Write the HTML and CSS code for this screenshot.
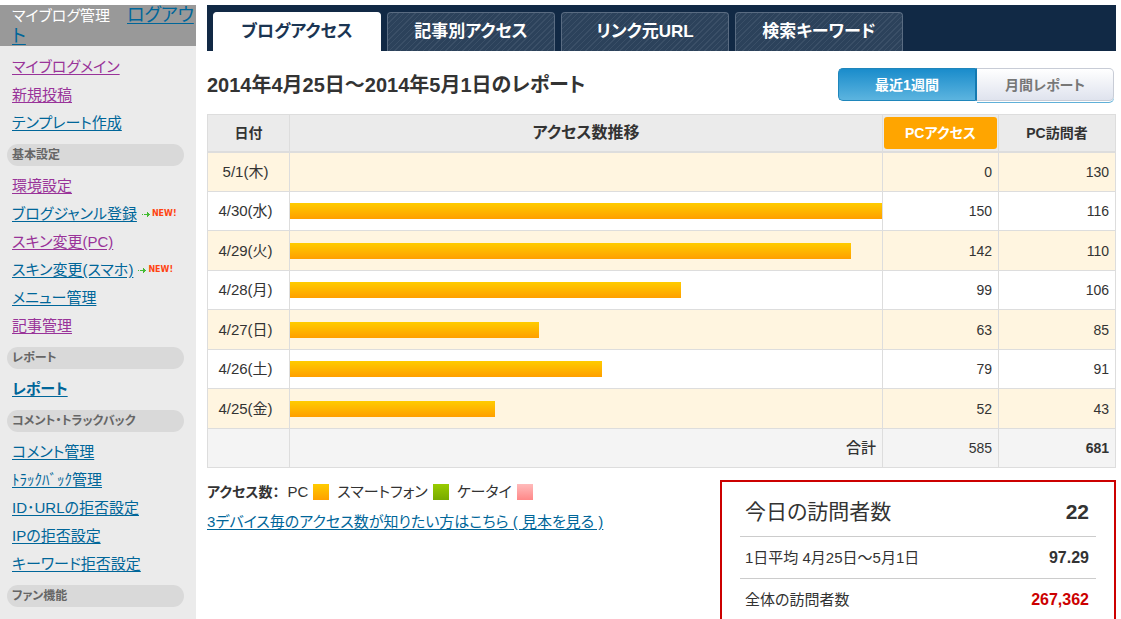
FILE: index.html
```html
<!DOCTYPE html>
<html lang="ja">
<head>
<meta charset="utf-8">
<title>アクセスレポート</title>
<link rel="stylesheet" href="styles.css">
</head>
<body>
<div class="page">
  <nav class="sidebar" aria-label="マイブログ管理">
    <div class="side-head"><span class="side-title">マイブログ管理</span><a class="logout" href="#">ログアウト</a></div>
    <ul class="links">
      <li><a class="visited" href="#">マイブログメイン</a></li>
      <li><a class="visited" href="#">新規投稿</a></li>
      <li><a href="#">テンプレート作成</a></li>
    </ul>
    <h2 class="group">基本設定</h2>
    <ul class="links">
      <li><a class="visited" href="#">環境設定</a></li>
      <li><a href="#">ブログジャンル登録</a><span class="new"><svg class="arrow" viewBox="0 0 9 7" aria-hidden="true"><path d="M0 3h1v1H0zM2 3h3V1h1v1h1v1h1v1H7v1H6v1H5V4H2z"/></svg>NEW!</span></li>
      <li><a class="visited" href="#">スキン変更(PC)</a></li>
      <li><a href="#">スキン変更(スマホ)</a><span class="new"><svg class="arrow" viewBox="0 0 9 7" aria-hidden="true"><path d="M0 3h1v1H0zM2 3h3V1h1v1h1v1h1v1H7v1H6v1H5V4H2z"/></svg>NEW!</span></li>
      <li><a href="#">メニュー管理</a></li>
      <li><a class="visited" href="#">記事管理</a></li>
    </ul>
    <h2 class="group">レポート</h2>
    <ul class="links">
      <li><a class="current" href="#">レポート</a></li>
    </ul>
    <h2 class="group">コメント・トラックバック</h2>
    <ul class="links">
      <li><a href="#">コメント管理</a></li>
      <li><a href="#">ﾄﾗｯｸﾊﾞｯｸ管理</a></li>
      <li><a href="#">ID･URLの拒否設定</a></li>
      <li><a href="#">IPの拒否設定</a></li>
      <li><a href="#">キーワード拒否設定</a></li>
    </ul>
    <h2 class="group">ファン機能</h2>
  </nav>

  <main class="main">
    <nav class="tabs" aria-label="レポート種別">
      <a class="tab active" href="#">ブログアクセス</a>
      <a class="tab" href="#">記事別アクセス</a>
      <a class="tab" href="#">リンク元URL</a>
      <a class="tab" href="#">検索キーワード</a>
    </nav>

    <div class="title-row">
      <h1 class="title">2014年4月25日～2014年5月1日のレポート</h1>
      <div class="period">
        <button class="period-btn on" type="button">最近1週間</button>
        <button class="period-btn" type="button">月間レポート</button>
      </div>
    </div>

    <table class="report">
      <colgroup><col class="c-date"><col><col class="c-access"><col class="c-visitor"></colgroup>
      <thead>
        <tr><th>日付</th><th class="wide">アクセス数推移</th><th class="sort"><button class="sort-btn" type="button">PCアクセス</button></th><th>PC訪問者</th></tr>
      </thead>
      <tbody>
        <tr><td class="date">5/1(木)</td><td class="graph"></td><td>0</td><td>130</td></tr>
        <tr><td class="date">4/30(水)</td><td class="graph"><div class="bar" style="width:100%"></div></td><td>150</td><td>116</td></tr>
        <tr><td class="date">4/29(火)</td><td class="graph"><div class="bar" style="width:94.7%"></div></td><td>142</td><td>110</td></tr>
        <tr><td class="date">4/28(月)</td><td class="graph"><div class="bar" style="width:66%"></div></td><td>99</td><td>106</td></tr>
        <tr><td class="date">4/27(日)</td><td class="graph"><div class="bar" style="width:42%"></div></td><td>63</td><td>85</td></tr>
        <tr><td class="date">4/26(土)</td><td class="graph"><div class="bar" style="width:52.7%"></div></td><td>79</td><td>91</td></tr>
        <tr><td class="date">4/25(金)</td><td class="graph"><div class="bar" style="width:34.7%"></div></td><td>52</td><td>43</td></tr>
      </tbody>
      <tfoot>
        <tr><td></td><td class="sum">合計</td><td>585</td><td class="strong">681</td></tr>
      </tfoot>
    </table>

    <div class="below">
      <div class="notes">
        <div class="legend">
          <strong>アクセス数：</strong>
          <span class="key">PC<i class="swatch pc"></i></span>
          <span class="key">スマートフォン<i class="swatch sp"></i></span>
          <span class="key">ケータイ<i class="swatch mb"></i></span>
        </div>
        <a class="more" href="#">3デバイス毎のアクセス数が知りたい方はこちら ( 見本を見る )</a>
      </div>
      <dl class="summary">
        <div class="row first"><dt>今日の訪問者数</dt><dd>22</dd></div>
        <div class="row"><dt>1日平均 4月25日～5月1日</dt><dd>97.29</dd></div>
        <div class="row total"><dt>全体の訪問者数</dt><dd>267,362</dd></div>
      </dl>
    </div>
  </main>
</div>
</body>
</html>
```
FILE: styles.css
```css
* { box-sizing: border-box; }

body {
  margin: 0;
  background: #fff;
  color: #333;
  font: 15px/20px "Liberation Sans", "Noto Sans CJK JP", sans-serif;
  font-feature-settings: "palt";
}

a { color: #069; text-underline-offset: 2px; }
button { font: inherit; cursor: pointer; }

.page {
  display: flex;
  gap: 11px;
  height: 100vh;
  overflow: hidden;
  padding: 5px 5px 0 0;
}

/* Sidebar */
.sidebar { flex: 0 0 196px; background: #ebebeb; }

.side-head {
  padding: 0 0 0 12px;
  height: 41px;
  margin-bottom: 7px;
  background: #999;
  color: #fff;
  line-height: 21px;
}
.side-title { margin-right: 17px; font-size: 15px; }
.logout { font-size: 18px; }

.links { list-style: none; margin: 0; padding: 0 0 0 12px; }
.links li { display: flex; align-items: center; height: 28px; white-space: nowrap; }
.visited { color: #939; }
.current { font-weight: bold; }

.group {
  height: 22px;
  margin: 7px 12px 6px 7px;
  padding-left: 5px;
  border-radius: 11px;
  background: #d9d9d9;
  color: #666;
  font-size: 12px;
  line-height: 22px;
}

.new {
  display: inline-flex;
  align-items: center;
  gap: 1px;
  margin-left: 5px;
  color: #f41;
  font: bold 8px/8px "DejaVu Sans", sans-serif;
}
.arrow { width: 9px; height: 7px; fill: #4b3; }

/* Tabs */
.main { flex: 1; min-width: 0; }

.tabs {
  display: flex;
  gap: 6px;
  height: 46px;
  padding: 7px 6px 0;
  background: #112945;
}
.tab {
  flex: 0 0 168px;
  border: 1px solid #5a6c82;
  border-bottom: 0;
  border-radius: 4px 4px 0 0;
  background: repeating-linear-gradient(135deg, #2c425b 0 3px, #3a4f67 3px 4px);
  color: #fff;
  font-size: 17px;
  font-weight: bold;
  line-height: 38px;
  text-align: center;
  text-decoration: none;
}
.tab.active { border-color: #fff; background: #fff; color: #1b3553; }

/* Title and period switch */
.title-row {
  display: flex;
  justify-content: space-between;
  align-items: center;
  height: 63px;
  padding: 4px 2px 0 0;
}
.title { margin: 0; font-size: 20px; line-height: 28px; white-space: nowrap; }

.period { display: flex; height: 33px; }
.period-btn {
  width: 137px;
  padding: 0;
  border: 1px solid #c8ccd6;
  border-left: 0;
  border-radius: 0 5px 5px 0;
  background: linear-gradient(#fff, #dfe3ee);
  box-shadow: 0 1px #fff, 0 2px #5fb0d8;
  color: #777;
  font-size: 14px;
  font-weight: bold;
}
.period-btn.on {
  width: 139px;
  border: 1px solid #1f86bb;
  border-right: 2px solid #1479b0;
  border-radius: 5px 0 0 5px;
  background: linear-gradient(#1a8ccb, #5cb4df);
  box-shadow: none;
  color: #fff;
}

/* Report table */
.report { width: 100%; border-collapse: collapse; table-layout: fixed; }
.c-date { width: 82px; }
.c-access { width: 116px; }
.c-visitor { width: 117px; }
.report th, .report td { border: 1px solid #ddd; padding: 0 6px; }
.report th { height: 37px; padding: 0; border-bottom-width: 2px; background: #ebebeb; font-size: 14px; }
.report th.wide { font-size: 16px; }
.report td { height: 39px; text-align: right; font-size: 14px; }
.report tbody tr:nth-child(odd) td { height: 40px; background: #fff5e0; }
.report td.date { padding: 0 6px 0 0; text-align: center; font-size: 15px; }
.report td.graph { padding: 0; }
.report tfoot td { background: #f4f4f4; }
.report td.sum { font-size: 15px; font-weight: 500; }
.report td.strong { font-weight: bold; }
.report th.sort { padding: 0 1px; }
.sort-btn {
  display: block;
  width: 100%;
  height: 32px;
  border: 0;
  border-radius: 3px;
  background: #ffa500;
  color: #fff;
  font-weight: bold;
}
.bar { height: 16px; background: linear-gradient(#fc0, #ff9f00); }

/* Legend and visitor summary */
.below { display: flex; justify-content: space-between; align-items: flex-start; padding-top: 12px; }
.legend { display: flex; align-items: center; gap: 8px; height: 24px; margin-bottom: 8px; }
.legend strong { font-size: 14px; }
.key { display: flex; align-items: center; gap: 5px; }
.swatch { width: 16px; height: 16px; }
.pc { background: linear-gradient(#fc0, #ffa000); }
.sp { background: linear-gradient(#9c0, #7a0); }
.mb { background: linear-gradient(#fbb, #f88); }
.more { font-size: 15px; }

.summary {
  flex: 0 0 396px;
  margin: 0;
  padding: 6px 18px 20px;
  border: 2px solid #c00;
}
.row {
  display: flex;
  justify-content: space-between;
  align-items: center;
  height: 42px;
  padding: 0 7px 0 5px;
  border-bottom: 1px solid #ccc;
}
.row dt { font-size: 15px; }
.row dd { margin: 0; font-size: 16px; font-weight: bold; }
.row.first { height: 49px; }
.row.first dt, .row.first dd { font-size: 21px; }
.row.total { border-bottom: 0; }
.row.total dd { color: #c00; }
```
